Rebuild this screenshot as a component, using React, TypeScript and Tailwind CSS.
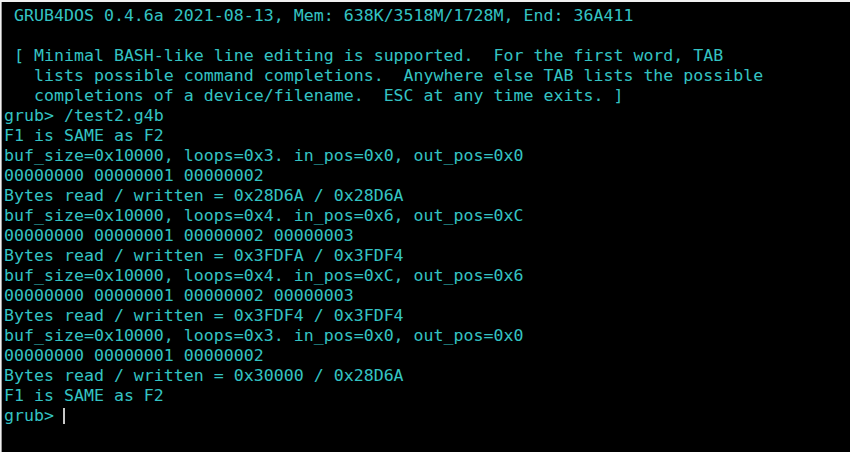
const lines = [
  " GRUB4DOS 0.4.6a 2021-08-13, Mem: 638K/3518M/1728M, End: 36A411",
  "",
  " [ Minimal BASH-like line editing is supported.  For the first word, TAB",
  "   lists possible command completions.  Anywhere else TAB lists the possible",
  "   completions of a device/filename.  ESC at any time exits. ]",
  "grub> /test2.g4b",
  "F1 is SAME as F2",
  "buf_size=0x10000, loops=0x3. in_pos=0x0, out_pos=0x0",
  "00000000 00000001 00000002",
  "Bytes read / written = 0x28D6A / 0x28D6A",
  "buf_size=0x10000, loops=0x4. in_pos=0x6, out_pos=0xC",
  "00000000 00000001 00000002 00000003",
  "Bytes read / written = 0x3FDFA / 0x3FDF4",
  "buf_size=0x10000, loops=0x4. in_pos=0xC, out_pos=0x6",
  "00000000 00000001 00000002 00000003",
  "Bytes read / written = 0x3FDF4 / 0x3FDF4",
  "buf_size=0x10000, loops=0x3. in_pos=0x0, out_pos=0x0",
  "00000000 00000001 00000002",
  "Bytes read / written = 0x30000 / 0x28D6A",
  "F1 is SAME as F2",
];

export default function App() {
  return (
    <div className="w-[850px] h-[452px] bg-[#f0f0f0] pt-[2px] overflow-hidden">
      <div className="h-[450px] bg-black border-l border-l-[#9a9a9a] ml-[1px] pl-[2px] pt-[4px] font-['DejaVu_Sans_Mono',monospace] text-[16.6px] leading-[20px] text-[#34c3c3] whitespace-pre">
        {lines.map((l, i) => (
          <div key={i} className="h-[20px]">
            {l}
          </div>
        ))}
        <div className="h-[20px] flex items-center">
          <span>grub&gt; </span>
          <span className="w-[2px] h-[16px] bg-[#c8c8c8] -ml-[1px]" />
        </div>
      </div>
    </div>
  );
}
